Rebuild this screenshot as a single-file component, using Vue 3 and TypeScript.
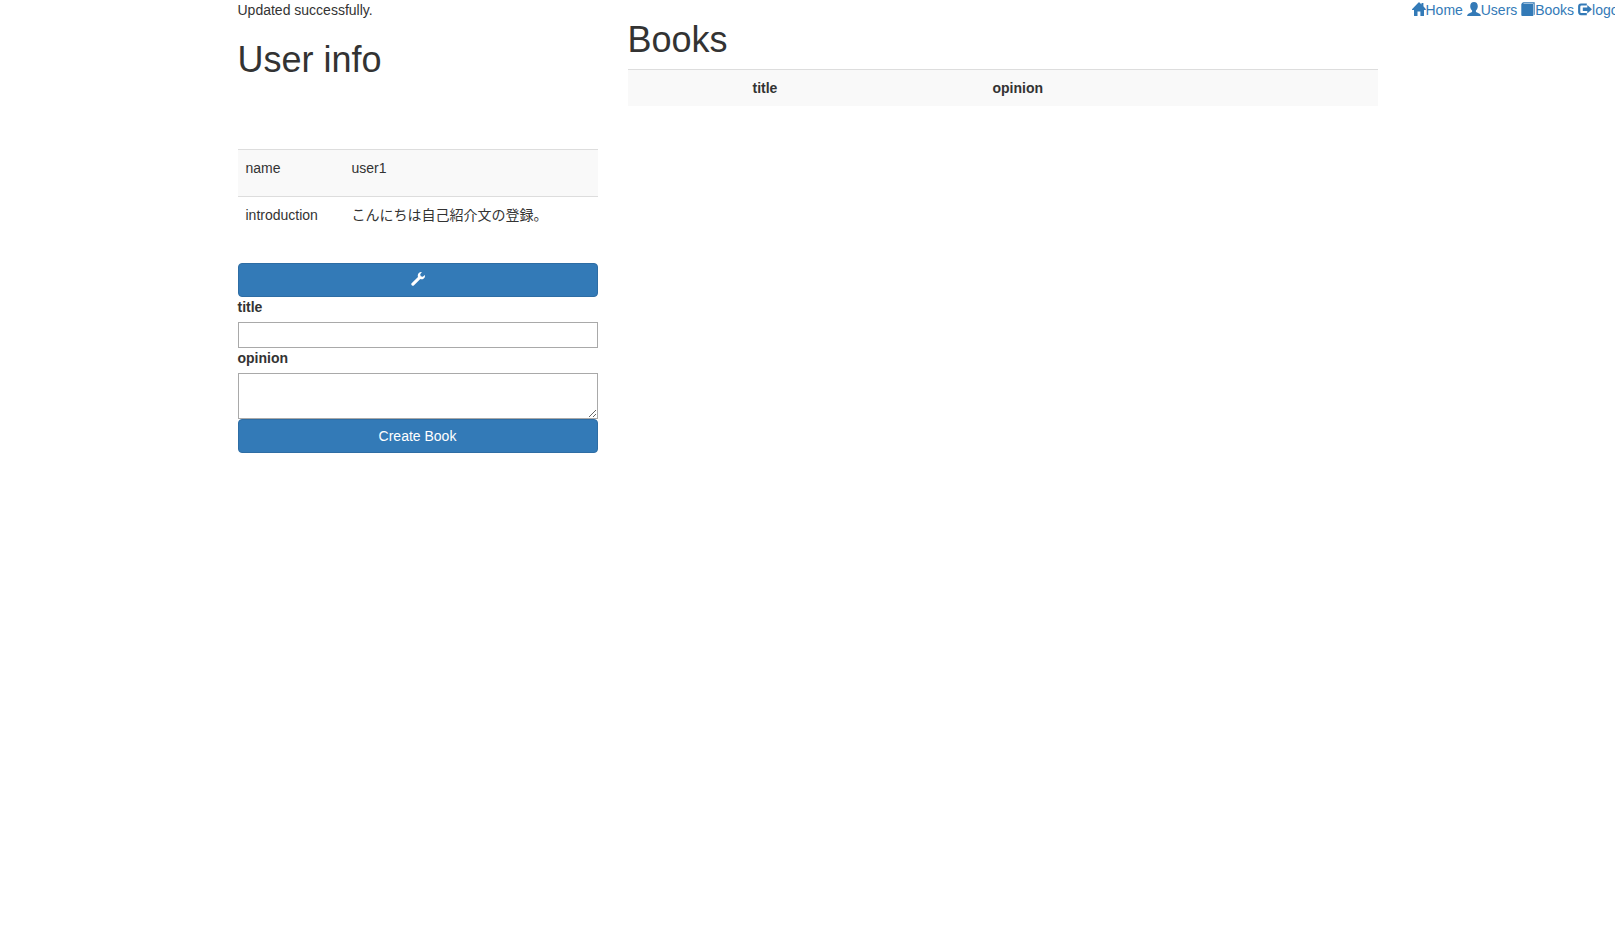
<script setup lang="ts">
import { ref } from 'vue'

interface NavItem {
  label: string
  icon: string
}

const navItems: NavItem[] = [
  {
    label: 'Home',
    icon: 'M6.5 .4Q7 -.1 7.5 .4L9.5 2.4V1.1H11.4V4.3L13.9 7.2Q14.1 7.9 13.5 7.9H12V13.5Q12 14 11.5 14H8.4V9.5H5.5V14H2.5Q2 14 2 13.5V7.9H.4Q-.2 7.9 0 7.2Z',
  },
  {
    label: 'Users',
    icon: 'M7 .1C9.3 .1 10.8 1.7 10.8 4.2C10.8 6 10 7.6 8.9 8.6V9.4Q8.9 10 9.5 10.2L12.6 11.7Q13.9 12.4 13.9 14H.1Q.1 12.4 1.4 11.7L4.5 10.2Q5.1 10 5.1 9.4V8.6C4 7.6 3.2 6 3.2 4.2C3.2 1.7 4.7 .1 7 .1Z',
  },
  {
    label: 'Books',
    icon: 'M2.5 .2H13.7V12.6L12.5 13.8V1.4H2.9L2.1 2.1H12V14H1.3Q.3 14 .3 13V2.6Q.3 1.9 .9 1.3Q1.7 .2 2.5 .2Z',
  },
  {
    label: 'logout',
    icon: 'M3 1.4H8.8V3.5H3.5Q2.3 3.5 2.3 4.7V9.9Q2.3 11.1 3.5 11.1H8.8V13.2H3Q.1 13.2 .1 10.1V4.5Q.1 1.4 3 1.4ZM9.3 3.1L14 7.3L9.3 11.5V9H4.8V5.6H9.3Z',
  },
]

const profile = [
  { key: 'name', value: 'user1' },
  { key: 'introduction', value: 'こんにちは自己紹介文の登録。' },
]

const title = ref('')
const opinion = ref('')
</script>

<template>
  <div class="page">
    <main class="container">
      <section class="side">
        <p class="notice">Updated successfully.</p>
        <h1>User info</h1>
        <div class="avatar"></div>
        <table class="profile">
          <colgroup>
            <col class="key" />
            <col />
          </colgroup>
          <tbody>
            <tr v-for="row in profile" :key="row.key">
              <th scope="row">{{ row.key }}</th>
              <td>{{ row.value }}</td>
            </tr>
          </tbody>
        </table>
        <button class="btn" type="button" aria-label="Edit profile">
          <svg class="icon" viewBox="0 0 14 14" aria-hidden="true">
            <path
              d="M10.9 .1L9.2 2.2L9.7 4.2L11.8 4.7L13.8 3C14.3 4.6 13.6 6.2 12.2 6.9C11.3 7.4 10.2 7.4 9.3 7L2.8 13.4Q1.9 14.2 1 13.4L.6 13Q-.2 12.1 .6 11.2L7 4.9C6.5 3.6 6.8 2.1 7.8 1.1C8.7 .2 9.8 -.1 10.9 .1Z"
            />
          </svg>
        </button>
        <form @submit.prevent>
          <label for="book-title">title</label>
          <input id="book-title" v-model="title" type="text" />
          <label for="book-opinion">opinion</label>
          <textarea id="book-opinion" v-model="opinion" rows="2"></textarea>
          <button class="btn" type="submit">Create Book</button>
        </form>
      </section>

      <section class="main">
        <h1>Books</h1>
        <table class="books">
          <colgroup>
            <col class="thumb" />
            <col class="title" />
            <col />
          </colgroup>
          <thead>
            <tr>
              <th></th>
              <th scope="col">title</th>
              <th scope="col">opinion</th>
            </tr>
          </thead>
        </table>
      </section>
    </main>

    <nav>
      <template v-for="item in navItems" :key="item.label">
        <a href="#"
          ><svg class="icon" viewBox="0 0 14 14" aria-hidden="true"><path :d="item.icon" /></svg
          >{{ item.label }}</a
        >{{ ' ' }}
      </template>
    </nav>
  </div>
</template>

<style>
body {
  margin: 0;
  background: #fff;
}
</style>

<style scoped>
.page,
.page * {
  box-sizing: border-box;
}

.page {
  display: grid;
  grid-template-columns: minmax(0, 1fr) minmax(0, 1170px) minmax(0, 1fr);
  font-family: 'Liberation Sans', 'Noto Sans CJK JP', sans-serif;
  font-size: 14px;
  line-height: 20px;
  color: #333;
}

.container {
  grid-column: 2;
  display: grid;
  grid-template-columns: minmax(0, 1fr) minmax(0, 2fr);
}

.side,
.main {
  padding: 0 15px;
}

.notice {
  margin: 0;
}

h1 {
  margin: 20px 0 10px;
  font-size: 36px;
  font-weight: 500;
  line-height: 39px;
}

.avatar {
  height: 60px;
}

table {
  width: 100%;
  margin-bottom: 20px;
  border-collapse: collapse;
  border-spacing: 0;
  table-layout: fixed;
}

th,
td {
  padding: 8px;
  border-top: 1px solid #ddd;
  text-align: left;
  vertical-align: top;
}

tr:nth-child(odd) {
  background: #f9f9f9;
}

.profile th,
.profile td {
  padding-bottom: 18px;
  font-weight: 400;
}

.profile .key {
  width: 106px;
}

.books .thumb {
  width: 117px;
}

.books .title {
  width: 240px;
}

.btn {
  display: block;
  width: 100%;
  padding: 6px 12px;
  border: 1px solid #2e6da4;
  border-radius: 4px;
  background: #337ab7;
  color: #fff;
  font: inherit;
  text-align: center;
  cursor: pointer;
}

label {
  display: block;
  margin-bottom: 5px;
  font-weight: 700;
}

input,
textarea {
  display: block;
  width: 100%;
  margin: 0;
  padding: 2px;
  border: 1px solid #a9a9a9;
  border-radius: 0;
  background: #fff;
  color: inherit;
  font: inherit;
}

input {
  height: 26px;
}

textarea {
  height: 46px;
  resize: both;
}

nav {
  padding-left: 19px;
  overflow: hidden;
  white-space: nowrap;
}

a {
  color: #337ab7;
  text-decoration: none;
}

.icon {
  display: inline-block;
  width: 14px;
  height: 14px;
  vertical-align: -1px;
  fill: currentColor;
}
</style>
